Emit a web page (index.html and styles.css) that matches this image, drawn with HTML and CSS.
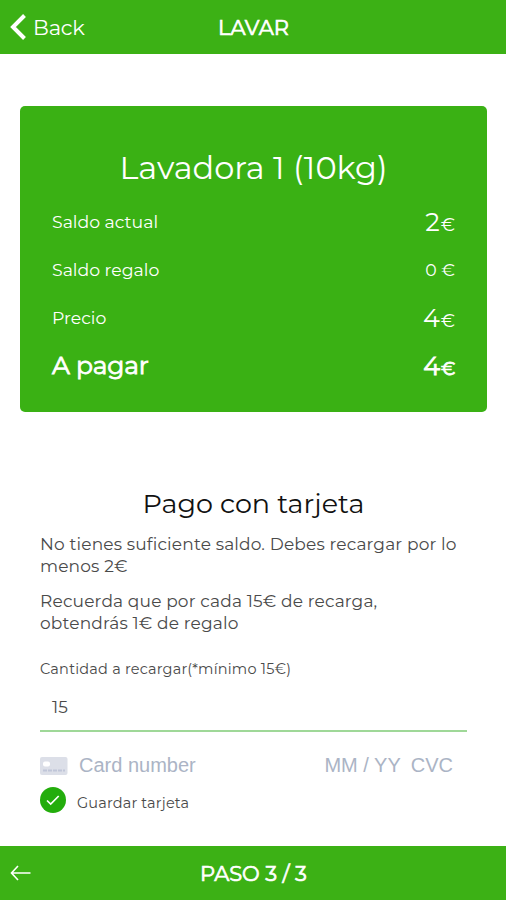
FILE: index.html
```html
<!DOCTYPE html>
<html lang="es">
<head>
    <meta charset="UTF-8">
    <meta name="viewport" content="width=device-width, initial-scale=1.0">
    <title>Lavar</title>
    <link rel="stylesheet" href="styles.css">
</head>
<body>
    <header class="top-bar">
        <a class="back">
            <svg width="17" height="28" viewBox="0 0 17 28"><path d="M14.5 2.5 L3 14 L14.5 25.5" fill="none" stroke="#fff" stroke-width="4"/></svg>
            <span>Back</span>
        </a>
        <h1>LAVAR</h1>
    </header>

    <main>
        <section class="summary">
            <h2>Lavadora 1 (10kg)</h2>
            <div class="row"><span class="name">Saldo actual</span><span class="price">2<small>€</small></span></div>
            <div class="row"><span class="name">Saldo regalo</span><span class="name">0 €</span></div>
            <div class="row"><span class="name">Precio</span><span class="price">4<small>€</small></span></div>
            <div class="row total"><span class="name">A pagar</span><span class="price">4<small>€</small></span></div>
        </section>

        <section class="payment">
            <h3>Pago con tarjeta</h3>
            <p>No tienes suficiente saldo. Debes recargar por lo<br>menos 2€</p>
            <p>Recuerda que por cada 15€ de recarga,<br>obtendrás 1€ de regalo</p>
            <div class="label">Cantidad a recargar(*mínimo 15€)</div>
            <div class="amount">15</div>
            <div class="card-field">
                <svg width="28" height="18" viewBox="0 0 28 18">
                    <rect width="27.5" height="18" rx="2" fill="#dcdfe8"/>
                    <rect x="3" y="4.5" width="7" height="5" rx="2" fill="#fff"/>
                    <path d="M3 13.5 H25" stroke="#c0c6d8" stroke-width="2" stroke-dasharray="4 1"/>
                </svg>
                <span class="card-number">Card number</span>
                <span class="expiry">MM / YY</span>
                <span>CVC</span>
            </div>
            <div class="save-card">
                <svg width="26" height="26" viewBox="0 0 26 26">
                    <circle cx="13" cy="13" r="13" fill="#23ad0c"/>
                    <path d="M7 13.5 L10.7 17 L18.7 9" fill="none" stroke="#fff" stroke-width="1.7"/>
                </svg>
                <span class="save-text">Guardar tarjeta</span>
            </div>
        </section>
    </main>

    <footer class="bottom-bar">
        <svg width="21" height="16" viewBox="0 0 21 16"><path d="M8 1 L1.5 8 L8 15 M1.5 8 H20.5" fill="none" stroke="#fff" stroke-width="1.6"/></svg>
        <span class="step">PASO 3 / 3</span>
    </footer>
</body>
</html>
```
FILE: styles.css
```css
* {
    box-sizing: border-box;
}
body {
    margin: 0;
    height: 900px;
    display: flex;
    flex-direction: column;
    font-family: Montserrat, Inter, sans-serif;
    background-color: #fff;
    color: #4a4a4a;
}
h1, h2, h3, p {
    margin: 0;
    font-weight: 400;
}
svg {
    display: block;
    flex: none;
}
.top-bar, .bottom-bar {
    display: grid;
    grid-template-columns: 1fr auto 1fr;
    align-items: center;
    height: 54px;
    padding: 0 9px 0 10px;
    background-color: #3cb115;
    color: #fff;
}
.back {
    display: flex;
    align-items: center;
    gap: 6px;
    font-size: 21px;
    letter-spacing: -0.2px;
}
h1, .step {
    font-size: 21px;
    -webkit-text-stroke: 0.7px #fff;
}
main {
    flex: 1;
}
.summary {
    height: 306px;
    margin: 52px 19px 0 20px;
    padding: 40px 32px 0;
    border-radius: 5px;
    background-color: #3ab114;
    color: #fff;
}
h2 {
    text-align: center;
    font-size: 32px;
    line-height: 44px;
    margin-bottom: 8px;
}
.row {
    display: flex;
    justify-content: space-between;
    align-items: center;
    height: 48px;
    font-size: 17.3px;
}
.name, .price {
    padding-bottom: 2px;
}
.price {
    font-size: 25.5px;
}
.price small {
    margin-left: 1px;
    font-size: 18px;
}
.total {
    font-size: 25px;
    letter-spacing: -0.2px;
    -webkit-text-stroke: 0.8px #fff;
}
.payment {
    padding: 74px 39px 0 40px;
}
h3 {
    text-align: center;
    font-size: 27px;
    line-height: 36px;
    color: #111;
    margin-bottom: 11px;
}
p {
    font-size: 17px;
    letter-spacing: 0.16px;
    line-height: 22px;
    margin-bottom: 13px;
}
.label {
    padding-top: 13px;
    font-size: 14.5px;
    letter-spacing: 0.2px;
}
.amount {
    height: 54px;
    padding: 19px 12px;
    font-size: 17px;
    border-bottom: 2px solid #9fd898;
}
.card-field {
    display: flex;
    align-items: center;
    margin-top: 22px;
    padding-right: 14px;
    font-family: "Liberation Sans", sans-serif;
    font-size: 20px;
    color: #abb4c5;
}
.card-number {
    flex: 1;
    margin-left: 11px;
}
.expiry {
    margin-right: 10px;
}
.save-card {
    display: flex;
    align-items: center;
    gap: 11px;
    margin-top: 10px;
    font-size: 14.5px;
    letter-spacing: 0.15px;
}
.save-text {
    padding-top: 5px;
}
```
